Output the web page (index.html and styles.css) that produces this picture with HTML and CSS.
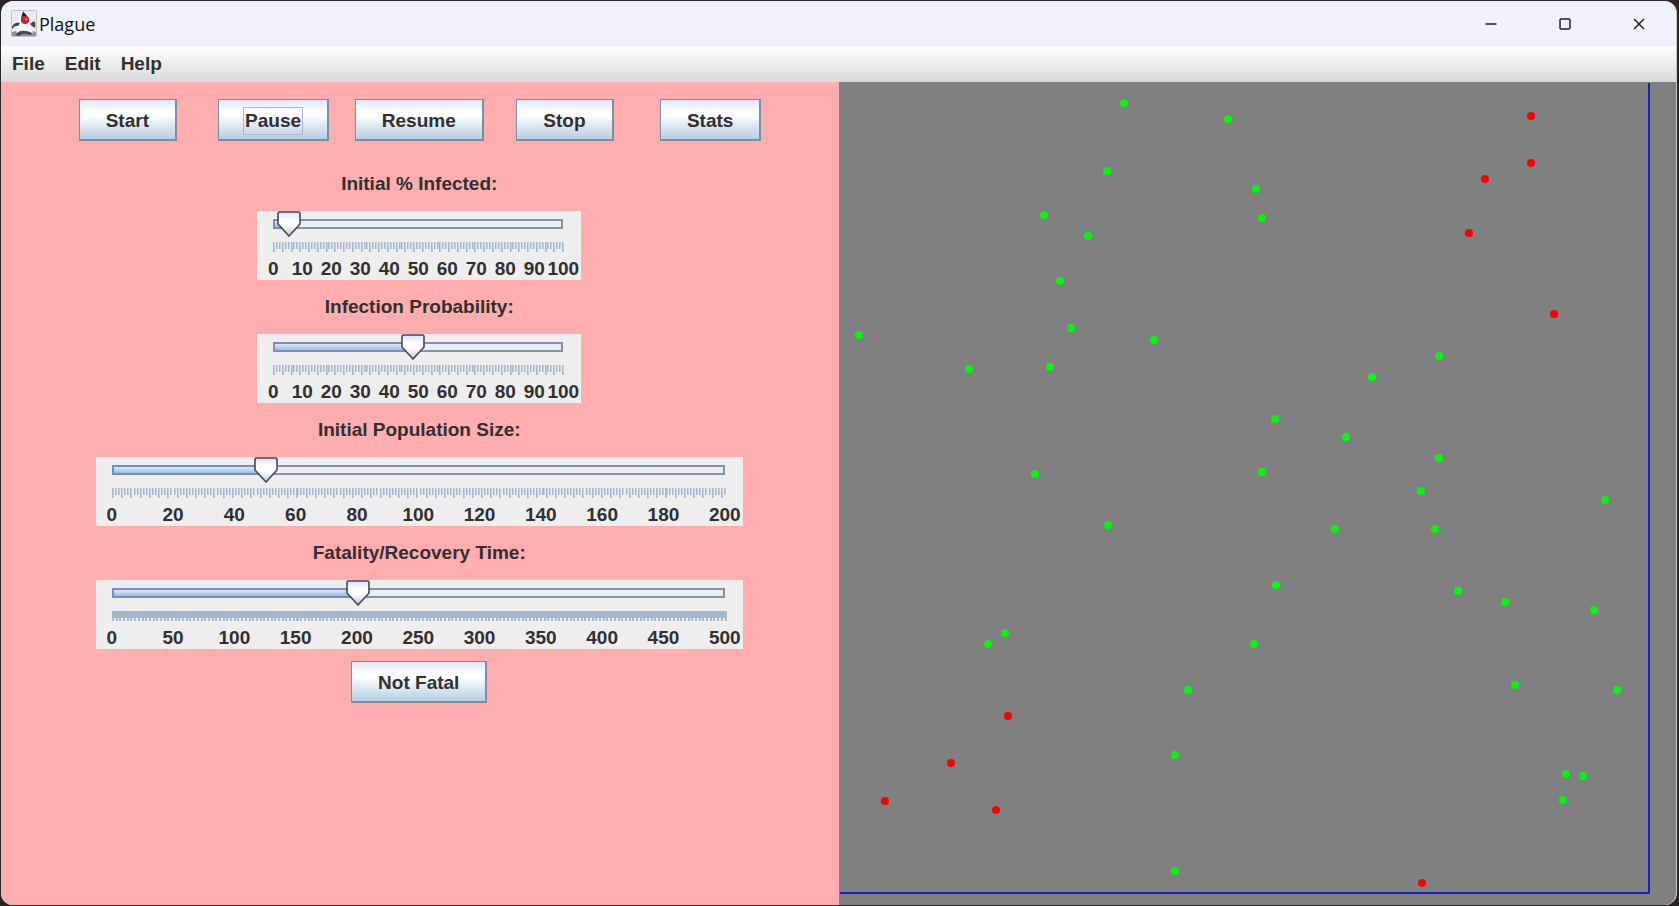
FILE: index.html
```html
<!DOCTYPE html>
<html lang="en">
<head>
<meta charset="utf-8">
<title>Plague</title>
<link rel="stylesheet" href="styles.css">
</head>
<body>
<div class="window">
  <header class="titlebar">
    <svg class="app-icon" width="26" height="27" viewBox="0 0 26 27" aria-hidden="true">
      <rect x="0.5" y="0.5" width="25" height="26" rx="1" fill="#e9edf2" stroke="#b9c4d2"/>
      <path d="M1 26V22Q6 20 13 20T25 22V26Z" fill="#8d949c"/>
      <path d="M11 2Q14 5 17 8Q20 15 22 24Q17 22 13 22Q9 22 5 25Q6 14 9 7Z" fill="#f8f9fa"/>
      <path d="M12 1.500Q15 4 17.500 8L18 12L10 11Q10 6 12 1.500Z" fill="#20252a"/>
      <path d="M1 17Q3 12 9 13L7 16Q4 15 1 19ZM19 14L23 11Q25 13 24 18L21 16Z" fill="#3b4249"/>
      <path d="M4 25Q8 20 14 21Q19 21 22 24L18 25Q13 22 8 26Z" fill="#444b53"/>
      <circle cx="14" cy="10" r="4" fill="#cf2229"/>
      <circle cx="15" cy="9" r="1.500" fill="#ef5a58"/>
    </svg>
    <h1 class="title">Plague</h1>
    <div class="window-controls">
      <button type="button" class="window-button" aria-label="Minimize">
        <svg width="12" height="12" viewBox="0 0 12 12"><path d="M0.500 6H11.500" /></svg>
      </button>
      <button type="button" class="window-button" aria-label="Maximize">
        <svg width="12" height="12" viewBox="0 0 12 12"><rect x="1" y="1" width="10" height="10" rx="1"/></svg>
      </button>
      <button type="button" class="window-button" aria-label="Close">
        <svg width="12" height="12" viewBox="0 0 12 12"><path d="M1 1L11 11M11 1L1 11"/></svg>
      </button>
    </div>
  </header>
  <nav class="menubar">
    <button type="button" class="menu">File</button>
    <button type="button" class="menu">Edit</button>
    <button type="button" class="menu">Help</button>
  </nav>
  <main class="content">
    <section class="controls">
      <div class="button-row">
        <button type="button" class="button">Start</button>
        <button type="button" class="button"><span class="focus-ring">Pause</span></button>
        <button type="button" class="button">Resume</button>
        <button type="button" class="button">Stop</button>
        <button type="button" class="button">Stats</button>
      </div>

      <label class="label" for="infected">Initial % Infected:</label>
      <div class="slider">
        <div class="track-area">
          <div class="track"><div class="fill" style="width: 5%"></div></div>
          <input class="range" id="infected" type="range" min="0" max="100" value="5">
        </div>
        <div class="ticks ticks-100"></div>
        <div class="scale"><span>0</span><span>10</span><span>20</span><span>30</span><span>40</span><span>50</span><span>60</span><span>70</span><span>80</span><span>90</span><span>100</span></div>
      </div>

      <label class="label" for="probability">Infection Probability:</label>
      <div class="slider">
        <div class="track-area">
          <div class="track"><div class="fill" style="width: 48%"></div></div>
          <input class="range" id="probability" type="range" min="0" max="100" value="48">
        </div>
        <div class="ticks ticks-100"></div>
        <div class="scale"><span>0</span><span>10</span><span>20</span><span>30</span><span>40</span><span>50</span><span>60</span><span>70</span><span>80</span><span>90</span><span>100</span></div>
      </div>

      <label class="label" for="population">Initial Population Size:</label>
      <div class="slider slider-wide">
        <div class="track-area">
          <div class="track"><div class="fill" style="width: 25%"></div></div>
          <input class="range" id="population" type="range" min="0" max="200" value="50">
        </div>
        <div class="ticks ticks-200"></div>
        <div class="scale"><span>0</span><span>20</span><span>40</span><span>60</span><span>80</span><span>100</span><span>120</span><span>140</span><span>160</span><span>180</span><span>200</span></div>
      </div>

      <label class="label" for="recovery">Fatality/Recovery Time:</label>
      <div class="slider slider-wide">
        <div class="track-area">
          <div class="track"><div class="fill" style="width: 40%"></div></div>
          <input class="range" id="recovery" type="range" min="0" max="500" value="200">
        </div>
        <div class="ticks ticks-500"></div>
        <div class="scale"><span>0</span><span>50</span><span>100</span><span>150</span><span>200</span><span>250</span><span>300</span><span>350</span><span>400</span><span>450</span><span>500</span></div>
      </div>

      <button type="button" class="button fatal-button">Not Fatal</button>
    </section>
    <section class="world">
      <svg class="population" role="img" aria-label="Population">
        <g transform="translate(-840 -83)">
          <g fill="#00fa0a">
            <circle cx="1124" cy="103" r="4"/><circle cx="1228" cy="119" r="4"/>
            <circle cx="1107" cy="171" r="4"/><circle cx="1256" cy="189" r="4"/>
            <circle cx="1262" cy="218" r="4"/><circle cx="1044" cy="215" r="4"/>
            <circle cx="1088" cy="236" r="4"/><circle cx="1060" cy="281" r="4"/>
            <circle cx="1071" cy="328" r="4"/><circle cx="859" cy="335" r="4"/>
            <circle cx="1154" cy="340" r="4"/><circle cx="969" cy="369" r="4"/>
            <circle cx="1050" cy="367" r="4"/><circle cx="1439" cy="356" r="4"/>
            <circle cx="1372" cy="377" r="4"/><circle cx="1275" cy="419" r="4"/>
            <circle cx="1346" cy="437" r="4"/><circle cx="1439" cy="458" r="4"/>
            <circle cx="1035" cy="474" r="4"/><circle cx="1262" cy="472" r="4"/>
            <circle cx="1421" cy="491" r="4"/><circle cx="1605" cy="500" r="4"/>
            <circle cx="1108" cy="525" r="4"/><circle cx="1335" cy="529" r="4"/>
            <circle cx="1435" cy="529" r="4"/><circle cx="1276" cy="585" r="4"/>
            <circle cx="1458" cy="591" r="4"/><circle cx="1505" cy="602" r="4"/>
            <circle cx="1594" cy="610" r="4"/><circle cx="1005" cy="633" r="4"/>
            <circle cx="988" cy="644" r="4"/><circle cx="1254" cy="644" r="4"/>
            <circle cx="1188" cy="690" r="4"/><circle cx="1515" cy="685" r="4"/>
            <circle cx="1617" cy="690" r="4"/><circle cx="1175" cy="755" r="4"/>
            <circle cx="1566" cy="774" r="4"/><circle cx="1583" cy="776" r="4"/>
            <circle cx="1563" cy="800" r="4"/><circle cx="1175" cy="871" r="4"/>
          </g>
          <g fill="#fa0000">
            <circle cx="1531" cy="116" r="4"/><circle cx="1531" cy="163" r="4"/>
            <circle cx="1485" cy="179" r="4"/><circle cx="1469" cy="233" r="4"/>
            <circle cx="1554" cy="314" r="4"/><circle cx="1008" cy="716" r="4"/>
            <circle cx="951" cy="763" r="4"/><circle cx="885" cy="801" r="4"/>
            <circle cx="996" cy="810" r="4"/><circle cx="1422" cy="883" r="4"/>
          </g>
        </g>
      </svg>
    </section>
  </main>
</div>
</body>
</html>
```
FILE: styles.css
```css
* {
  box-sizing: border-box;
}

body {
  display: flex;
  min-height: 100vh;
  margin: 0;
  padding: 1px 3px 1px 1px;
  background: #2b2526;
  color: #303030;
  font: bold 19px/22px "Liberation Sans", Arial, sans-serif;
}

button {
  margin: 0;
  border: 0;
  background: none;
  color: inherit;
  font: inherit;
}

.window {
  display: flex;
  flex: 1;
  flex-direction: column;
  overflow: hidden;
  border-radius: 12px;
  background: #eef3fb;
  box-shadow: 1px 0 #c8c8c8;
}

.titlebar {
  display: flex;
  align-items: center;
  height: 45px;
  padding-left: 10px;
}

.title {
  flex: 1;
  margin: 0 0 0 2px;
  color: #111;
  font: 18px/24px "Open Sans", "Noto Sans", sans-serif;
}

.window-controls {
  display: flex;
}

.window-button {
  display: flex;
  align-items: center;
  justify-content: center;
  width: 74px;
  height: 44px;
  padding: 0;
}

.window-button svg {
  fill: none;
  stroke: #222;
  stroke-width: 1.5;
}

.menubar {
  display: flex;
  height: 36px;
  padding-left: 1px;
  border-bottom: 1px solid #d5dade;
  background: linear-gradient(#fff, #dadada);
}

.menu {
  padding: 0 10px;
}

.content {
  display: grid;
  flex: 1;
  grid-template-columns: 1fr 1fr;
}

.controls {
  display: flex;
  flex-direction: column;
  align-items: center;
  padding: 17px 1px 0 0;
  background: #ffadaf;
}

.button-row {
  display: grid;
  grid-template-columns: repeat(5, 1fr);
  justify-items: center;
  align-self: stretch;
  margin-bottom: 16px;
  padding: 0 54px;
}

.button {
  display: flex;
  align-items: center;
  justify-content: center;
  height: 42px;
  padding: 2px 26px 0;
  border: 1px solid #7a8fa6;
  border-right-width: 2px;
  border-bottom-width: 2px;
  background: linear-gradient(#dde8f3, #fff 30%, #fff 40%, #dde8f3 65%, #b8cfe5);
}

.focus-ring {
  padding: 2px 1px;
  margin: 0 -1px;
  outline: 1px solid #a3b8cc;
}

.label {
  line-height: 54px;
}

.slider {
  width: 324px;
  max-width: 100%;
  height: 69px;
  padding: 0 18px 0 16px;
  background: #eee;
}

.slider-wide {
  width: 647px;
}

.track-area {
  display: grid;
  height: 31px;
}

.track,
.range {
  grid-area: 1 / 1;
}

.track {
  height: 10px;
  margin-top: 8px;
  border: 2px solid #8494a6;
  background: #e8eef6;
}

.fill {
  height: 6px;
  background: linear-gradient(#dce8f6, #9dbbe0);
  box-shadow: 0 0 0 2px #7590bf;
}

.range {
  width: auto;
  height: 26px;
  margin: 0 -13px 0 -11px;
  appearance: none;
  background: none;
}

.range::-webkit-slider-thumb {
  width: 24px;
  height: 26px;
  appearance: none;
  background: url("data:image/svg+xml,%3Csvg xmlns='http://www.w3.org/2000/svg' viewBox='0 0 24 26'%3E%3Cdefs%3E%3ClinearGradient id='g' x2='0' y2='1'%3E%3Cstop stop-color='%23cfe0f3'/%3E%3Cstop offset='.3' stop-color='%23fff'/%3E%3Cstop offset='.55' stop-color='%23fff'/%3E%3Cstop offset='1' stop-color='%23b0cbea'/%3E%3C/linearGradient%3E%3C/defs%3E%3Cpath d='M2 1H22L23 2V13L12 25L1 13V2Z' fill='url(%23g)' stroke='%23414a55' stroke-width='1.6'/%3E%3C/svg%3E");
}

.ticks {
  height: 10px;
  margin-right: -2px;
  background-repeat: no-repeat;
  background-size: 100% 7px, 100% 10px;
}

.ticks-100 {
  background-image:
    repeating-linear-gradient(90deg, #a3b8cc 0 1px, #c4d1de 1px 2px, transparent 2px 1%),
    repeating-linear-gradient(90deg, #a3b8cc 0 1px, #b8c8d8 1px 2px, transparent 2px 3%);
}

.ticks-200 {
  background-image:
    repeating-linear-gradient(90deg, #a3b8cc 0 1px, #c4d1de 1px 2px, transparent 2px 0.5%),
    repeating-linear-gradient(90deg, #a3b8cc 0 1px, #b8c8d8 1px 2px, transparent 2px 1.5%);
}

.ticks-500 {
  background-image:
    linear-gradient(#a3b8cc, #a3b8cc),
    repeating-linear-gradient(90deg, #a3b8cc 0 2px, transparent 2px 0.6%);
}

.scale {
  display: flex;
  justify-content: space-between;
  margin-top: 6px;
}

.scale span {
  display: flex;
  justify-content: center;
  width: 0;
}

.fatal-button {
  margin-top: 12px;
}

.world {
  display: grid;
  padding: 1px 26px 11px 1px;
  background: #808080;
}

.population {
  width: 100%;
  height: 100%;
  overflow: visible;
  border: solid #1c1cc4;
  border-width: 0 2px 2px 0;
}
```
